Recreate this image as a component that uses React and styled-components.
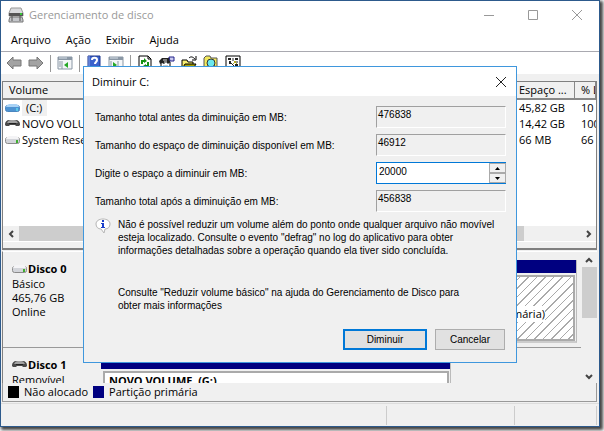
import React, { useState } from 'react';
import styled, { createGlobalStyle } from 'styled-components';

const GlobalStyle = createGlobalStyle`
  * {
    box-sizing: border-box;
  }

  body {
    margin: 0;
    background: #fff;
    color: #000;
    font-family: 'Open Sans', 'Noto Sans', sans-serif;
    font-size: 11px;
    line-height: 16px;
  }

  button, input {
    font: inherit;
    color: inherit;
  }
`;

const Desktop = styled.div`
  height: 100vh;
  padding: 0 4px 4px 0;
`;

const Window = styled.div`
  position: relative;
  display: flex;
  flex-direction: column;
  height: 100%;
  background: #f0f0f0;
  border: 1px solid #2d5a8c;
  box-shadow: 2px 2px 3px 1px #444;
`;

const TitleBar = styled.header`
  display: flex;
  align-items: center;
  flex: none;
  height: 28px;
  padding-left: 7px;
  background: #fff;
`;

const Title = styled.h1`
  flex: 1;
  margin: 0 0 0 5px;
  font-size: 11px;
  font-weight: 400;
  color: #999;
`;

const CaptionButton = styled.button`
  display: flex;
  align-items: center;
  justify-content: center;
  width: 44px;
  height: 28px;
  padding: 0;
  border: none;
  background: none;
  color: #999;
`;

const MenuBar = styled.nav`
  display: flex;
  flex: none;
  gap: 15px;
  height: 23px;
  padding: 3px 10px;
  background: #fff;
  border-bottom: 1px solid #a9a9b0;
  font-size: 11px;
`;

const MenuLink = styled.a`
  color: #000;
  text-decoration: none;
`;

const Toolbar = styled.div`
  display: flex;
  align-items: center;
  flex: none;
  height: 22px;
  padding-left: 2px;
  background: #fff;
`;

const ToolButton = styled.button`
  display: flex;
  align-items: center;
  justify-content: center;
  width: 22px;
  height: 20px;
  padding: 0;
  border: none;
  background: none;
`;

const Separator = styled.span`
  width: 1px;
  height: 17px;
  margin: 0 3px;
  background: #999;
`;

const VolumePane = styled.section`
  display: flex;
  flex-direction: column;
  flex: none;
  height: 169px;
  margin: 7px 2px 0 1px;
  border: solid #808080;
  border-width: 1px 1px 2px 1px;
`;

const VolumeScroll = styled.div`
  flex: 1;
  overflow: hidden;
  background: #fff;
`;

const VolumeTable = styled.table`
  width: 100%;
  table-layout: fixed;
  border-collapse: separate;
  border-spacing: 0;
`;

const HeadCell = styled.th`
  width: ${props => props.$width || 'auto'};
  height: 18px;
  padding: 0 0 0 6px;
  background: #f0f0f0;
  border-right: 1px solid #888;
  border-bottom: 2px solid #888;
  font-weight: 400;
  text-align: left;
  white-space: nowrap;
  overflow: hidden;
`;

const Cell = styled.td`
  height: 16px;
  padding: 0 0 0 ${props => (props.$first ? '2px' : '6px')};
  white-space: nowrap;
  overflow: hidden;
`;

const VolumeName = styled.div`
  display: flex;
  align-items: center;
  gap: 2px;
`;

const VolumeLabel = styled.span`
  padding: ${props => (props.$selected ? '0 5px 0 4px' : '0')};
  background: ${props => (props.$selected ? '#f0f0f0' : 'transparent')};
`;

const HorizontalBar = styled.div`
  display: flex;
  align-items: center;
  flex: none;
  height: 15px;
  background: #f0f0f0;
`;

const BarThumb = styled.span`
  flex: 1;
  height: 100%;
  margin-right: 56px;
  background: #cdcdcd;
`;

const BarArrow = styled.button`
  display: flex;
  align-items: center;
  justify-content: center;
  flex: none;
  width: 16px;
  height: 15px;
  padding: 0;
  border: none;
  background: none;
`;

const VolumeFoot = styled.div`
  flex: none;
  height: 7px;
  border-top: 1px solid #fff;
`;

const DiskPane = styled.section`
  display: flex;
  flex: 1;
  min-height: 0;
  margin: 1px 2px 0 1px;
  border-left: 1px solid #808080;
  border-top: 1px solid #fff;
`;

const DiskList = styled.div`
  flex: 1;
  min-width: 0;
  overflow: hidden;
`;

const DiskRow = styled.div`
  display: flex;
  height: 96px;
  padding-top: 8px;
  border-bottom: 1px solid #999;
`;

const DiskInfo = styled.div`
  flex: none;
  width: 98px;
  padding: 1px 0 0 9px;
  line-height: 14px;
`;

const DiskName = styled.h2`
  display: flex;
  align-items: center;
  gap: 1px;
  margin: 0;
  font-size: 11px;
  line-height: 16px;
  font-weight: 700;
`;

const Partition = styled.div`
  display: flex;
  flex-direction: column;
  flex: ${props => (props.$width ? 'none' : '1')};
  width: ${props => props.$width || 'auto'};
  height: 83px;
  margin-right: 4px;
  border-right: 1px solid #bbb;
  border-bottom: 2px solid #ccc;
`;

const PartitionStripe = styled.div`
  flex: none;
  height: 13px;
  background: #000080;
`;

const PartitionBody = styled.div`
  display: flex;
  align-items: center;
  justify-content: ${props => (props.$hatched ? 'flex-end' : 'flex-start')};
  flex: 1;
  margin: 2px 1px 0 2px;
  padding: ${props => (props.$hatched ? '12px 28px 0 0' : '0 4px 46px')};
  border: 2px solid #aaa;
  background: ${props => (props.$hatched
    ? 'repeating-linear-gradient(135deg, #fff 0 5px, #aaa 5px 6px)'
    : '#fff')};
  font-weight: ${props => (props.$hatched ? 400 : 700)};
  white-space: pre;
`;

const PartitionText = styled.span`
  background: #fff;
`;

const VerticalBar = styled.div`
  display: flex;
  flex-direction: column;
  flex: none;
  width: 16px;
`;

const VerticalThumb = styled.span`
  height: 51px;
  margin-left: 1px;
  background: #cdcdcd;
`;

const Spacer = styled.span`
  flex: 1;
`;

const Legend = styled.div`
  display: flex;
  align-items: center;
  flex: none;
  gap: 5px;
  height: 19px;
  margin: 0 2px 0 1px;
  padding-left: 5px;
  border: solid #999;
  border-width: 0 1px 1px;
`;

const Swatch = styled.span`
  width: 11px;
  height: 12px;
  background: ${props => props.$color};
`;

const StatusBar = styled.footer`
  display: flex;
  flex: none;
  height: 23px;
  margin-top: 1px;
  padding: 2px 2px 1px 0;
  border-top: 1px solid #ddd;
`;

const StatusCell = styled.span`
  flex: ${props => (props.$width ? 'none' : '1')};
  width: ${props => props.$width || 'auto'};
  border-right: 1px solid #ccc;
`;

// The dialog floats over the main window
const Dialog = styled.form`
  position: absolute;
  top: 65px;
  left: 82px;
  right: 82px;
  background: #f0f0f0;
  border: 1px solid #3f97dd;
`;

const DialogTitleBar = styled.div`
  display: flex;
  align-items: center;
  height: 29px;
  padding-left: 8px;
  background: #fff;
`;

const DialogTitle = styled.h2`
  flex: 1;
  margin: 0;
  font-size: 11px;
  font-weight: 400;
`;

const CloseButton = styled.button`
  display: flex;
  align-items: center;
  justify-content: center;
  width: 30px;
  height: 28px;
  padding: 0;
  border: none;
  background: none;
  color: #222;
`;

const DialogBody = styled.div`
  padding: 10px 10px 12px 11px;
  font-family: 'Liberation Sans', Arial, sans-serif;
  font-size: 10px;
  line-height: 13px;
`;

const Fields = styled.div`
  display: flex;
  flex-direction: column;
  gap: 6px;
`;

const Field = styled.div`
  display: flex;
  align-items: center;
  justify-content: space-between;
`;

const ReadOnlyValue = styled.output`
  width: 130px;
  height: 22px;
  padding: 1px 0 0 1px;
  border: 1px solid;
  border-color: #a0a0a0 #fff #fff #a0a0a0;
`;

const SpinBox = styled.div`
  display: flex;
  width: 130px;
  height: 22px;
  background: #fff;
  border: 1px solid #0078d7;
  border-right: none;
`;

const SpinInput = styled.input`
  flex: 1;
  min-width: 0;
  padding: 0 0 3px 2px;
  border: none;
  outline: none;
  background: none;
`;

const SpinButtons = styled.div`
  display: flex;
  flex-direction: column;
  width: 17px;
  background: #f0f0f0;
`;

const SpinButton = styled.button`
  display: flex;
  align-items: center;
  justify-content: center;
  flex: 1;
  padding: 0;
  border: 1px solid #aaa;
  background: #f0f0f0;
`;

const Notice = styled.div`
  display: flex;
  gap: 7px;
  margin-top: 6px;
`;

const Paragraph = styled.p`
  flex: 1;
  margin: 0;
`;

const HelpNote = styled.p`
  margin: 29px 40px 0 23px;
`;

const Actions = styled.div`
  display: flex;
  justify-content: flex-end;
  gap: 8px;
  margin-top: 17px;
  padding-right: 1px;
`;

const ActionButton = styled.button`
  width: ${props => (props.$primary ? '84px' : '70px')};
  height: 21px;
  padding: 0;
  background: #e1e1e1;
  border: ${props => (props.$primary ? '2px solid #0078d7' : '1px solid #adadad')};
`;

const DRIVE_COLORS = {
  blue: ['#a9d2f5', '#4e93d2', '#4a86bf'],
  gray: ['#f4f4f6', '#d3d5da', '#8a8a8a'],
};

const DriveIcon = ({ tone }) => {
  if (tone === 'dark') {
    return (
      <svg width="15" height="10" viewBox="0 0 15 10">
        <path d="M0 5c0-2 2-4 4-4h7c2 0 4 2 4 4v1l-1 1h-3l-1-1H5L4 7H1L0 6z" fill="#4a4a4a" />
        <path d="M2 4c1-2 2-3 4-3h3c2 0 3 1 4 3z" fill="#a2a2a2" />
        <path d="M4 4h7v1H4z" fill="#222" />
      </svg>
    );
  }
  const [top, front, line] = DRIVE_COLORS[tone];
  return (
    <svg width="15" height="10" viewBox="0 0 15 10">
      <rect x=".5" y="2.500" width="14" height="6" rx="2" fill={front} stroke={line} />
      <path d="M1 4c1-3 3-3 4-3h5c2 0 3 0 4 3z" fill={top} />
      <path d="M11 5h2v3h-2z" fill={tone === 'gray' ? '#3fae2f' : '#5bc8e8'} />
    </svg>
  );
};

const AppIcon = () => (
  <svg width="16" height="16" viewBox="0 0 16 16">
    <path d="M3 1h10l2 5v3H1V6z" fill="#d9dadd" stroke="#999" />
    <path d="M1 6h14v3H1z" fill="#555" />
    <path d="M12 6h2v2h-2z" fill="#35c435" />
    <path d="M2 10h12l1 3v2H1v-2z" fill="#c4c6ca" stroke="#777" />
    <path d="M4 9v5M12 9v5" stroke="#555" />
  </svg>
);

const ArrowIcon = ({ forward }) => (
  <svg width="16" height="14" viewBox="0 0 16 14">
    <path
      d={forward ? 'M15 7 9 1v3H1v6h8v3z' : 'M1 7l6-6v3h8v6H7v3z'}
      fill="#a3a3a3"
      stroke="#777"
    />
  </svg>
);

const PanelIcon = ({ flipped }) => (
  <svg width="16" height="14" viewBox="0 0 16 14">
    <path d="M1 1h14v12H1z" fill="#f4f6f8" stroke="#8a97a5" />
    <path d="M1 1h14v3H1z" fill="#8a97a5" />
    <path d="M2 2h8" stroke="#d8e0e8" />
    <path d={flipped ? 'M10 5v8' : 'M5 5v8'} stroke="#8a97a5" />
    <path d="M2 6h2M2 8h2M2 10h2" stroke="#8a97a5" />
    <path d={flipped ? 'M5 6v6l4-3z' : 'M11 6v6L7 9z'} fill="#26a826" />
  </svg>
);

const HelpIcon = () => (
  <svg width="14" height="16" viewBox="0 0 14 16">
    <path d="M1 1h12v14H1z" fill="#3b62cc" stroke="#1d358c" />
    <path d="M2 1v14" stroke="#8ca5ea" />
    <path d="M5 5c0-3 5-3 5 0 0 2-2 2-2 4M8 11v2" fill="none" stroke="#fff" strokeWidth="2" />
  </svg>
);

const RefreshIcon = () => (
  <svg width="14" height="16" viewBox="0 0 14 16">
    <path d="M1 1h9l3 3v11H1z" fill="#fff" stroke="#000" />
    <path d="M10 1v3h3" fill="none" stroke="#000" />
    <path d="M4 9V6h3M10 7v4H7" fill="none" stroke="#159215" strokeWidth="2" />
    <path d="M6 3l3 3-3 2zM8 9l-3 2 3 3z" fill="#159215" />
  </svg>
);

const PropertiesIcon = () => (
  <svg width="16" height="16" viewBox="0 0 16 16">
    <path d="M2 7h9v8H2z" fill="#fff" stroke="#000" />
    <path d="M0 6l3-3h6l2-1v5L9 9 7 7 5 9 3 8 1 9z" fill="#222" />
    <path d="M4 5h4M5 7h3" stroke="#ddd" />
    <path d="M10 2h5v4h-4z" fill="#c9c9ee" stroke="#22228a" />
    <path d="M4 11h5M4 13h5" stroke="#999" />
  </svg>
);

const OpenIcon = () => (
  <svg width="16" height="16" viewBox="0 0 16 16">
    <path d="M1 14V5h5l1 2h5v2" fill="#f7ef72" stroke="#000" />
    <path d="M1 14l3-5h11l-3 5z" fill="#a9a000" stroke="#000" />
    <path d="M8 3c2-2 4-1 6 1M15 1v4h-4" fill="none" stroke="#000" />
  </svg>
);

const SearchIcon = () => (
  <svg width="16" height="16" viewBox="0 0 16 16">
    <path d="M1 14V3l2-2h4l1 2h6v11z" fill="#f3e95b" stroke="#555" />
    <circle cx="8" cy="8" r="4" fill="#6be9ee" stroke="#333" />
    <path d="M11 11l4 4" stroke="#333" strokeWidth="2" />
  </svg>
);

const DetailsIcon = () => (
  <svg width="16" height="16" viewBox="0 0 16 16">
    <path d="M1 1h14v14H1z" fill="#fff" stroke="#000" />
    <path d="M3 3h3v2H3zM10 3h3v2h-3zM4 6h2v3H4zM3 11h3v2H3zM10 9h3v4h-3z" fill="#222" />
    <path d="M8 3v3M6 8l3 3M11 7h2M7 12h2" stroke="#222" />
    <path d="M9 6l3 3M8 9l3-3" stroke="#b5aa22" />
  </svg>
);

const CrossIcon = () => (
  <svg width="12" height="12" viewBox="0 0 12 12">
    <path d="M1 1l10 10M11 1 1 11" stroke="currentColor" />
  </svg>
);

const CHEVRONS = {
  left: 'M6 1 3 4l3 3',
  right: 'M3 1l3 3-3 3',
  up: 'M1 6l3-3 3 3',
  down: 'M1 3l3 3 3-3',
};

const Chevron = ({ direction }) => (
  <svg width="8" height="8" viewBox="0 0 8 8">
    <path d={CHEVRONS[direction]} fill="none" stroke="#444" strokeWidth="2" />
  </svg>
);

const InfoIcon = () => (
  <svg width="16" height="16" viewBox="0 0 16 16">
    <path d="M8 1c4 0 7 2 7 5s-2 5-5 5l-1 4-3-4c-3 0-5-2-5-5s3-5 7-5z" fill="#fff" stroke="#b5b5b5" />
    <path d="M7 2h2v2H7zM6 5h3v4h1v1H6V9h1V6H6z" fill="#1b3fc9" />
  </svg>
);

const volumes = [
  { name: '(C:)', tone: 'blue', free: '45,82 GB', percent: '10 %', selected: true },
  { name: 'NOVO VOLUME', tone: 'dark', free: '14,42 GB', percent: '100 %' },
  { name: 'System Reserved', tone: 'gray', free: '66 MB', percent: '66 %' },
];

const TOTAL_BEFORE = 476838;
const AVAILABLE = 46912;

const App = () => {
  const [amount, setAmount] = useState(20000);

  const changeAmount = (value) => {
    setAmount(Math.max(0, Math.min(AVAILABLE, Number(value) || 0)));
  };

  return (
    <Desktop>
      <GlobalStyle />
      <Window>
        <TitleBar>
          <AppIcon />
          <Title>Gerenciamento de disco</Title>
          <CaptionButton aria-label="Minimizar">
            <svg width="10" height="10" viewBox="0 0 10 10"><path d="M0 5.5h10" stroke="currentColor" /></svg>
          </CaptionButton>
          <CaptionButton aria-label="Maximizar">
            <svg width="10" height="10" viewBox="0 0 10 10"><path d="M.5.5h9v9h-9z" fill="none" stroke="currentColor" /></svg>
          </CaptionButton>
          <CaptionButton aria-label="Fechar"><CrossIcon /></CaptionButton>
        </TitleBar>

        <MenuBar>
          <MenuLink href="#arquivo">Arquivo</MenuLink>
          <MenuLink href="#acao">Ação</MenuLink>
          <MenuLink href="#exibir">Exibir</MenuLink>
          <MenuLink href="#ajuda">Ajuda</MenuLink>
        </MenuBar>

        <Toolbar>
          <ToolButton aria-label="Voltar"><ArrowIcon /></ToolButton>
          <ToolButton aria-label="Avançar"><ArrowIcon forward /></ToolButton>
          <Separator />
          <ToolButton aria-label="Árvore"><PanelIcon /></ToolButton>
          <Separator />
          <ToolButton aria-label="Ajuda"><HelpIcon /></ToolButton>
          <ToolButton aria-label="Painel de ações"><PanelIcon flipped /></ToolButton>
          <Separator />
          <ToolButton aria-label="Atualizar"><RefreshIcon /></ToolButton>
          <ToolButton aria-label="Propriedades"><PropertiesIcon /></ToolButton>
          <ToolButton aria-label="Abrir"><OpenIcon /></ToolButton>
          <ToolButton aria-label="Explorar"><SearchIcon /></ToolButton>
          <ToolButton aria-label="Detalhes"><DetailsIcon /></ToolButton>
        </Toolbar>

        <VolumePane>
          <VolumeScroll>
            <VolumeTable>
              <thead>
                <tr>
                  <HeadCell>Volume</HeadCell>
                  <HeadCell $width="62px">Espaço ...</HeadCell>
                  <HeadCell $width="21px">% Livre</HeadCell>
                </tr>
              </thead>
              <tbody>
                {volumes.map(volume => (
                  <tr key={volume.name}>
                    <Cell $first>
                      <VolumeName>
                        <DriveIcon tone={volume.tone} />
                        <VolumeLabel $selected={volume.selected}>{volume.name}</VolumeLabel>
                      </VolumeName>
                    </Cell>
                    <Cell>{volume.free}</Cell>
                    <Cell>{volume.percent}</Cell>
                  </tr>
                ))}
              </tbody>
            </VolumeTable>
          </VolumeScroll>
          <HorizontalBar>
            <BarArrow aria-label="Rolar para a esquerda"><Chevron direction="left" /></BarArrow>
            <BarThumb />
            <BarArrow aria-label="Rolar para a direita"><Chevron direction="right" /></BarArrow>
          </HorizontalBar>
          <VolumeFoot />
        </VolumePane>

        <DiskPane>
          <DiskList>
            <DiskRow>
              <DiskInfo>
                <DiskName><DriveIcon tone="gray" />Disco 0</DiskName>
                <div>Básico</div>
                <div>465,76 GB</div>
                <div>Online</div>
              </DiskInfo>
              <Partition>
                <PartitionStripe />
                <PartitionBody $hatched>
                  <PartitionText>(Partição primária)</PartitionText>
                </PartitionBody>
              </Partition>
            </DiskRow>
            <DiskRow>
              <DiskInfo>
                <DiskName><DriveIcon tone="dark" />Disco 1</DiskName>
                <div>Removível</div>
              </DiskInfo>
              <Partition $width="350px">
                <PartitionStripe />
                <PartitionBody>NOVO VOLUME  (G:)</PartitionBody>
              </Partition>
            </DiskRow>
          </DiskList>
          <VerticalBar>
            <BarArrow aria-label="Rolar para cima"><Chevron direction="up" /></BarArrow>
            <VerticalThumb />
            <Spacer />
            <BarArrow aria-label="Rolar para baixo"><Chevron direction="down" /></BarArrow>
          </VerticalBar>
        </DiskPane>

        <Legend>
          <Swatch $color="#000" />
          <span>Não alocado</span>
          <Swatch $color="#000080" />
          <span>Partição primária</span>
        </Legend>

        <StatusBar>
          <StatusCell />
          <StatusCell $width="128px" />
          <StatusCell $width="82px" />
        </StatusBar>

        <Dialog role="dialog" aria-labelledby="dialog-title" onSubmit={e => e.preventDefault()}>
          <DialogTitleBar>
            <DialogTitle id="dialog-title">Diminuir C:</DialogTitle>
            <CloseButton type="button" aria-label="Fechar"><CrossIcon /></CloseButton>
          </DialogTitleBar>
          <DialogBody>
            <Fields>
              <Field>
                <label htmlFor="total-before">Tamanho total antes da diminuição em MB:</label>
                <ReadOnlyValue id="total-before">{TOTAL_BEFORE}</ReadOnlyValue>
              </Field>
              <Field>
                <label htmlFor="available">Tamanho do espaço de diminuição disponível em MB:</label>
                <ReadOnlyValue id="available">{AVAILABLE}</ReadOnlyValue>
              </Field>
              <Field>
                <label htmlFor="amount">Digite o espaço a diminuir em MB:</label>
                <SpinBox>
                  <SpinInput id="amount" value={amount} onChange={e => changeAmount(e.target.value)} />
                  <SpinButtons>
                    <SpinButton type="button" aria-label="Aumentar" onClick={() => changeAmount(amount + 1)}>
                      <svg width="5" height="3" viewBox="0 0 5 3"><path d="M0 3 2.5 0 5 3z" /></svg>
                    </SpinButton>
                    <SpinButton type="button" aria-label="Reduzir" onClick={() => changeAmount(amount - 1)}>
                      <svg width="5" height="3" viewBox="0 0 5 3"><path d="M0 0l2.500 3L5 0z" /></svg>
                    </SpinButton>
                  </SpinButtons>
                </SpinBox>
              </Field>
              <Field>
                <label htmlFor="total-after">Tamanho total após a diminuição em MB:</label>
                <ReadOnlyValue id="total-after">{TOTAL_BEFORE - amount}</ReadOnlyValue>
              </Field>
            </Fields>
            <Notice>
              <InfoIcon />
              <Paragraph>
                Não é possível reduzir um volume além do ponto onde qualquer arquivo não movível<br />
                esteja localizado. Consulte o evento "defrag" no log do aplicativo para obter<br />
                informações detalhadas sobre a operação quando ela tiver sido concluída.
              </Paragraph>
            </Notice>
            <HelpNote>
              Consulte "Reduzir volume básico" na ajuda do Gerenciamento de Disco para<br />
              obter mais informações
            </HelpNote>
            <Actions>
              <ActionButton $primary>Diminuir</ActionButton>
              <ActionButton type="button">Cancelar</ActionButton>
            </Actions>
          </DialogBody>
        </Dialog>
      </Window>
    </Desktop>
  );
};

export default App;
